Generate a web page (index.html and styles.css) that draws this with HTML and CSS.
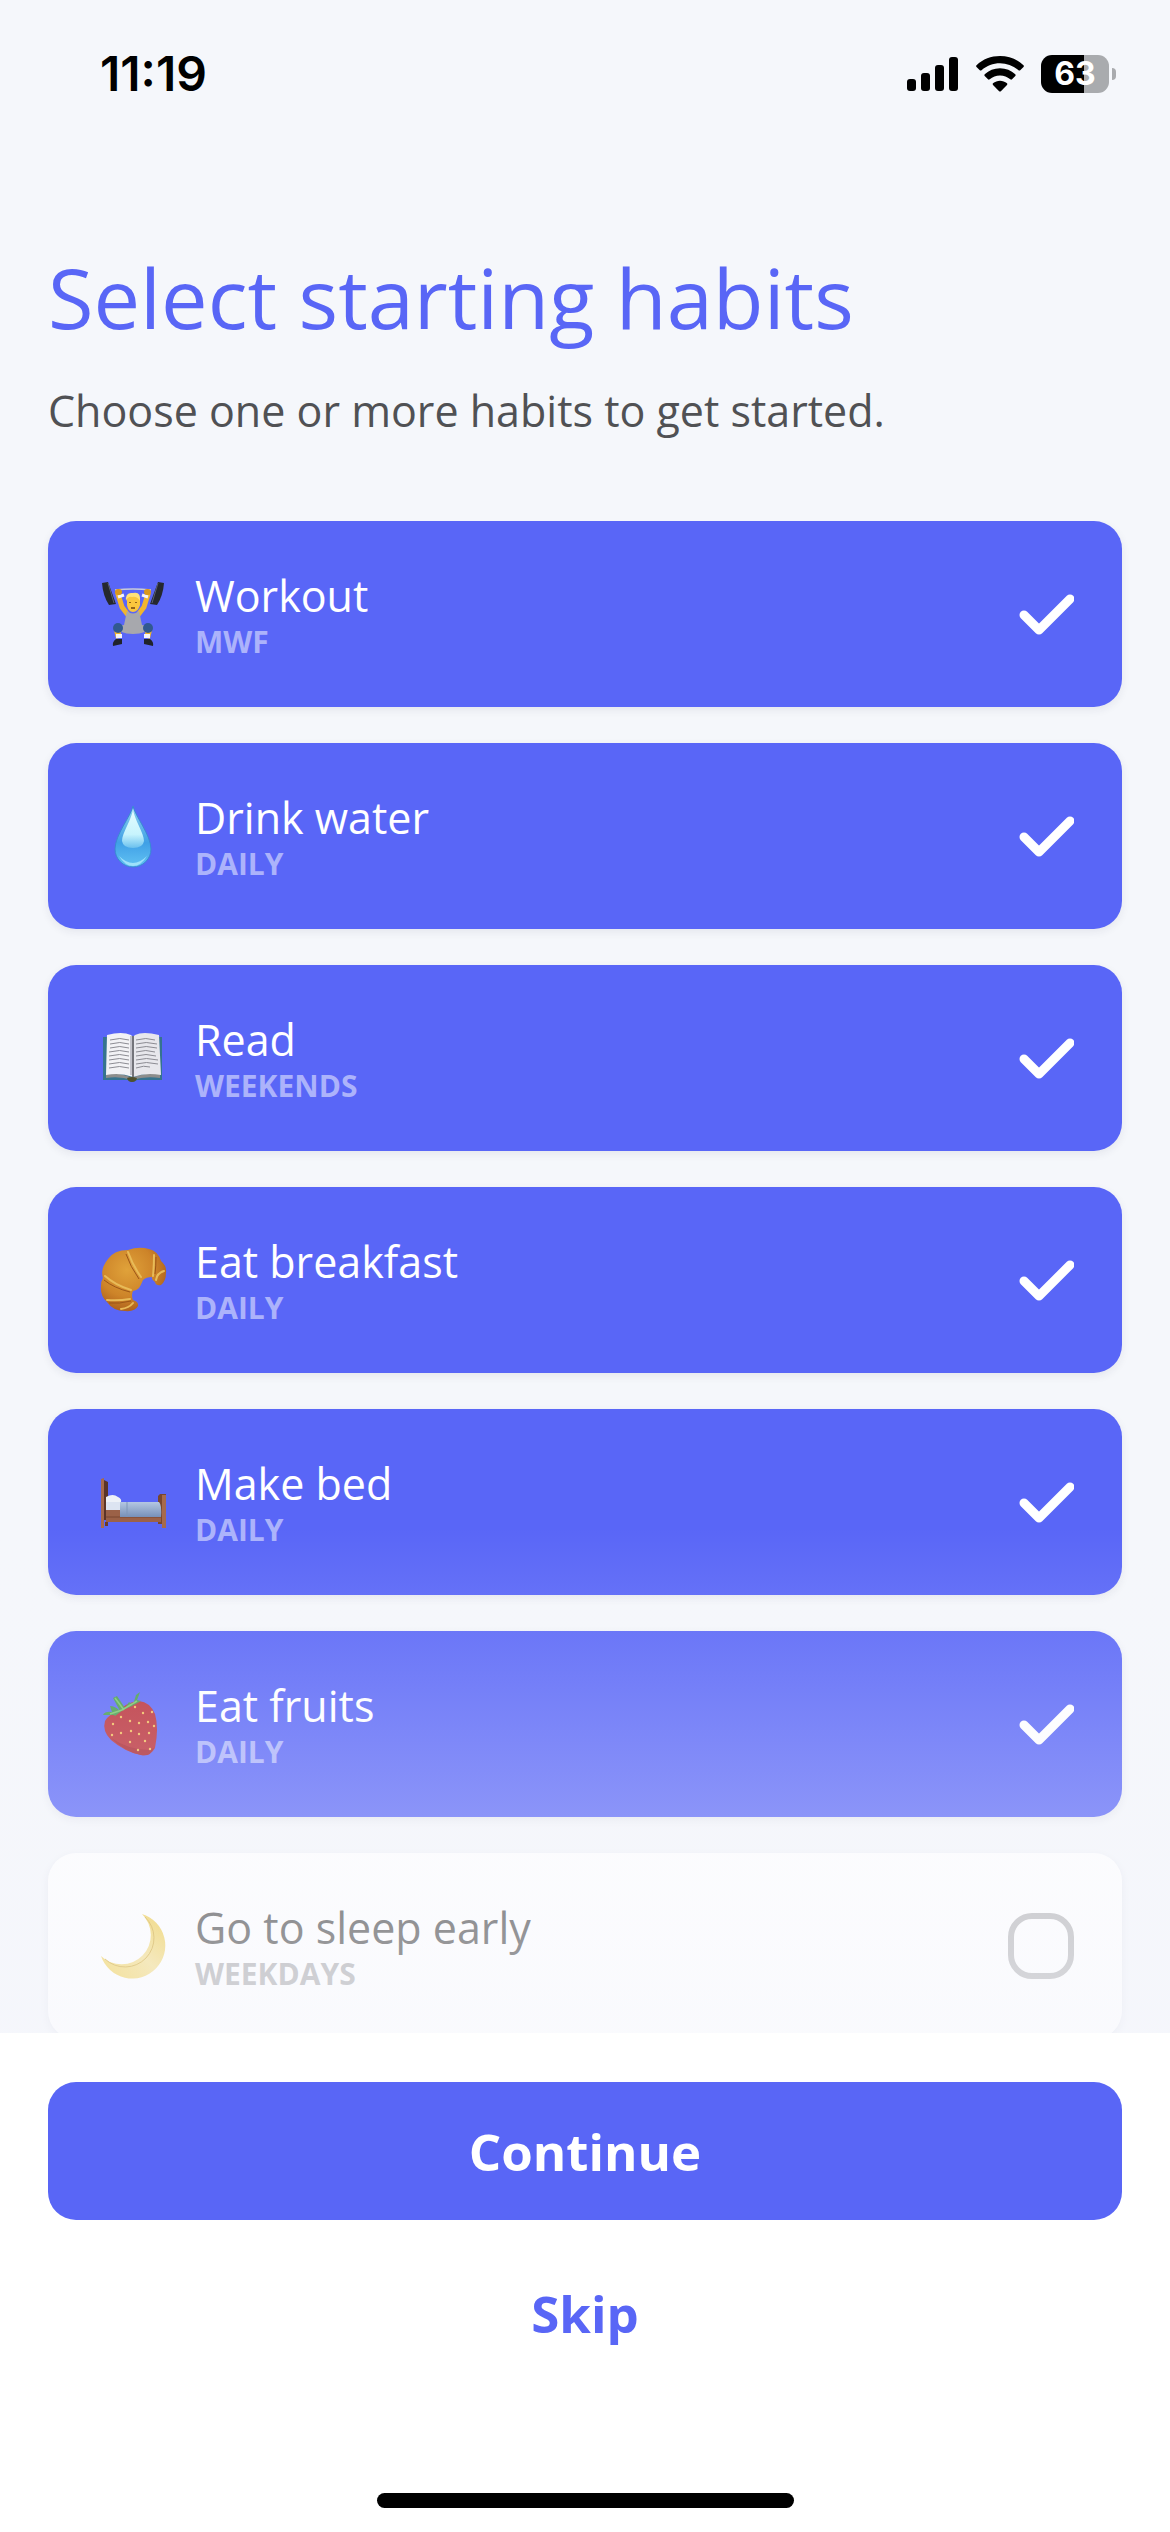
FILE: index.html
```html
<!DOCTYPE html>
<html lang="en">
<head>
    <meta charset="UTF-8">
    <meta name="viewport" content="width=device-width, initial-scale=1">
    <title>Select starting habits</title>
    <link rel="stylesheet" href="styles.css">
</head>
<body>
<!-- status bar -->
<div class="status">
    <span class="time">11:19</span>
    <div class="indicators">
        <svg width="52" height="36" viewBox="0 0 52 36">
            <rect x="0" y="23" width="9" height="12" rx="3"/>
            <rect x="14" y="17" width="9" height="18" rx="3"/>
            <rect x="28" y="9" width="9" height="26" rx="3"/>
            <rect x="42" y="1" width="9" height="34" rx="3"/>
        </svg>
        <svg width="48" height="36" viewBox="0 0 48 36">
            <path d="M24 0C33 0 41 3 47.500 9.200Q48.300 10 47.500 10.900L44.200 14.200Q43.400 15 42.500 14.200C37 9.500 31 7.200 24 7.200S11 9.500 5.500 14.200Q4.600 15 3.800 14.200L.5 10.900Q-.3 10 .5 9.200C7 3 15 0 24 0Z"/>
            <path d="M24 12.200C30 12.200 35 14.400 39.300 18.300Q40.100 19.200 39.300 20L36 23.300Q35.200 24 34.300 23.300C31.300 20.700 28 19.400 24 19.400S16.700 20.700 13.700 23.300Q12.800 24 12 23.300L8.700 20Q7.900 19.200 8.700 18.300C13 14.400 18 12.200 24 12.200Z"/>
            <path d="M24 24.700C26.500 24.700 29 25.600 31 27.200Q31.800 28 31 28.900L24.900 35.200Q24 36 23.100 35.200L17 28.900Q16.200 28 17 27.200C19 25.600 21.500 24.700 24 24.700Z"/>
        </svg>
        <div class="battery">
            <span class="level">63</span>
            <span class="tip"></span>
        </div>
    </div>
</div>

<header class="intro">
    <h1>Select starting habits</h1>
    <p>Choose one or more habits to get started.</p>
</header>

<!-- habit list -->
<main class="habits">
    <label class="habit selected">
        <svg class="emoji" viewBox="0 0 64 64">
            <path d="M14 8Q32 6 50 8" fill="none" stroke="#c9ccd8" stroke-width="1.500"/>
            <g fill="#25282e">
                <path d="M1 1 7 0 15 22 8 23Q2 14 1 1Z"/>
                <path d="M63 1 57 0 49 22 56 23Q62 14 63 1Z"/>
            </g>
            <g stroke="#596075" stroke-width="1">
                <path d="M7 1 13 21M57 1 51 21"/>
            </g>
            <path d="M17 12 21 25 27 33M47 12 43 25 37 33" fill="none" stroke="#f0b52e" stroke-width="5" stroke-linecap="round"/>
            <path d="M17 15 23 13M47 15 41 13" stroke="#f4f4f7" stroke-width="3"/>
            <rect x="14" y="7" width="7" height="6" rx="3" fill="#d9981d"/>
            <rect x="43" y="7" width="7" height="6" rx="3" fill="#d9981d"/>
            <path d="M16 48 18 56M48 48 46 56" stroke="#f0b52e" stroke-width="6"/>
            <path d="M15 54H21M43 54H49" stroke="#f4f4f7" stroke-width="4"/>
            <path d="M26 29Q32 34 38 29L41 43 50 44Q46 52 32 52T14 44L23 43Z" fill="#a7a8ad"/>
            <circle cx="17" cy="46" r="5" fill="#31598f"/>
            <circle cx="47" cy="46" r="5" fill="#31598f"/>
            <path d="M26 17Q26 11 32 11T39 17V23Q37 30 32 30T26 23Z" fill="#fac63d"/>
            <path d="M25 19Q24 10 32 11 40 9 39 19 36 14 31 15 27 14 25 19Z" fill="#ffe27a"/>
            <path d="M29 20V21M35 20V21M30 26H34" stroke="#70430f" stroke-width="1.500"/>
            <path d="M15 57H21V62L12 64Q11 60 15 57ZM43 57H49Q53 60 52 64L43 62Z" fill="#20232a"/>
        </svg>
        <span class="text">
            <span class="name">Workout</span>
            <span class="days">MWF</span>
        </span>
        <span class="tick">
            <input type="checkbox" checked>
            <svg viewBox="0 0 66 66"><path d="M16 34 31 49 62 18"/></svg>
        </span>
    </label>

    <label class="habit selected">
        <svg class="emoji" viewBox="0 0 64 64">
            <defs>
                <linearGradient id="drop" x1="0" y1="0" x2="0" y2="1">
                    <stop offset="0" stop-color="#8fd0ee"/>
                    <stop offset=".6" stop-color="#3fa0e6"/>
                    <stop offset="1" stop-color="#62c2f3"/>
                </linearGradient>
                <linearGradient id="shine" x1="0" y1="0" x2="0" y2="1">
                    <stop offset="0" stop-color="#e6fdff"/>
                    <stop offset=".65" stop-color="#c7f4fd"/>
                    <stop offset="1" stop-color="#6ac0ee"/>
                </linearGradient>
            </defs>
            <path d="M32 2C34 12 50 31 50 45A18 18 0 0 1 14 45C14 31 30 12 32 2Z" fill="url(#drop)" stroke="#3989d2" stroke-width="1"/>
            <path d="M32 5C33 15 43 29 43 37Q42 44 32 44T21 37C21 29 31 15 32 5Z" fill="url(#shine)"/>
            <path d="M18 52Q32 66 46 52 40 62 32 62T18 52Z" fill="#9de1fa"/>
        </svg>
        <span class="text">
            <span class="name">Drink water</span>
            <span class="days">DAILY</span>
        </span>
        <span class="tick">
            <input type="checkbox" checked>
            <svg viewBox="0 0 66 66"><path d="M16 34 31 49 62 18"/></svg>
        </span>
    </label>

    <label class="habit selected">
        <svg class="emoji" viewBox="0 0 64 64">
            <path d="M2 11H61V54H36Q31 58 27 54H2Z" fill="#35738f"/>
            <path d="M5 48Q19 46 31 52 44 46 59 48V52Q44 50 31 54 19 50 5 52Z" fill="#8c8d8c"/>
            <path d="M6 9Q21 5 30 9L32 11V51Q19 46 5 49Z" fill="#f2f2f5"/>
            <path d="M58 9Q42 5 34 9L32 11V51Q45 46 60 49Z" fill="#e7e7ec"/>
            <path d="M32 10V51" stroke="#73747a" stroke-width="2"/>
            <path d="M30 10V49" stroke="#c3c3ca" stroke-width="2"/>
            <g stroke="#8c8c93" stroke-width="1">
                <path d="M9 14Q19 11 28 14M9 18Q19 15 28 18M9 22Q19 19 28 22M8 26Q19 23 28 26M8 30Q19 27 28 30M8 34Q19 31 28 34M8 38Q19 35 28 38M8 42Q19 39 28 42" fill="none"/>
                <path d="M35 14Q45 11 54 14M35 18Q45 15 56 18M35 22Q45 19 56 22M35 26Q45 23 54 26M35 30Q45 27 55 30M35 34Q45 31 57 34M35 38Q45 35 57 38M35 42Q43 39 49 41" fill="none"/>
            </g>
            <path d="M26 52Q31 50 36 52 35 56 31 56T26 52Z" fill="#50512e"/>
        </svg>
        <span class="text">
            <span class="name">Read</span>
            <span class="days">WEEKENDS</span>
        </span>
        <span class="tick">
            <input type="checkbox" checked>
            <svg viewBox="0 0 66 66"><path d="M16 34 31 49 62 18"/></svg>
        </span>
    </label>

    <label class="habit selected">
        <svg class="emoji" viewBox="0 0 64 64">
            <defs>
                <radialGradient id="crust" cx=".4" cy=".35" r=".7">
                    <stop offset="0" stop-color="#e0a23a"/>
                    <stop offset=".6" stop-color="#cd8429"/>
                    <stop offset="1" stop-color="#a85a1a"/>
                </radialGradient>
            </defs>
            <path d="M27 2Q38-2 48 1 57 3 60 13 66 18 65 25 65 33 60 37 55 38 54 34 50 31 51 29 45 29 42 32 40 37 38 40 35 43 32 43 30 47 32 52 38 54 37 58 34 64 24 63 12 63 6 54-1 48 0 38 0 33 2 30-1 21 7 11 13 2 27 2Z" fill="url(#crust)"/>
            <g fill="none" stroke="#e8bb58" stroke-width="2" stroke-linecap="round">
                <path d="M27 4Q32 18 40 29"/>
                <path d="M53 7Q53 18 52 28"/>
                <path d="M4 28Q14 37 30 42"/>
                <path d="M6 52Q17 53 29 51"/>
                <path d="M63 23Q56 25 55 32"/>
                <path d="M20 61Q28 60 32 55"/>
            </g>
            <g fill="none" stroke="#9b5518" stroke-width="1">
                <path d="M25 6Q29 18 38 31M55 9Q55 18 54 26M3 32Q13 40 29 44M8 55Q18 56 30 53"/>
            </g>
        </svg>
        <span class="text">
            <span class="name">Eat breakfast</span>
            <span class="days">DAILY</span>
        </span>
        <span class="tick">
            <input type="checkbox" checked>
            <svg viewBox="0 0 66 66"><path d="M16 34 31 49 62 18"/></svg>
        </span>
    </label>

    <label class="habit selected">
        <svg class="emoji" viewBox="0 0 64 64">
            <defs>
                <linearGradient id="quilt" x1="0" y1="0" x2="0" y2="1">
                    <stop offset="0" stop-color="#b4c7e2"/>
                    <stop offset="1" stop-color="#7790b8"/>
                </linearGradient>
            </defs>
            <path d="M3 10 7 12V50H3Z" fill="#5b3428"/>
            <path d="M57 26 59 24H65V58H61V54H57Z" fill="#79462f"/>
            <path d="M5 40H60V52H5Z" fill="#9b6147"/>
            <path d="M5 47H60" stroke="#794630" stroke-width="1"/>
            <path d="M5 32H20V40H5Z" fill="#dce4f1"/>
            <path d="M5 27Q12 23 17 27 21 29 20 32H5Z" fill="#eef2f7"/>
            <path d="M19 32H58Q61 35 60 47H19Z" fill="url(#quilt)"/>
            <path d="M26 32V47" stroke="#7f96b9" stroke-width="1"/>
            <path d="M0 9 3 8V58H0Z" fill="#a7694b"/>
            <path d="M61 25H65V58H61Z" fill="#a66a4d"/>
            <path d="M4 52H7V56H4Z" fill="#6b3b2a"/>
        </svg>
        <span class="text">
            <span class="name">Make bed</span>
            <span class="days">DAILY</span>
        </span>
        <span class="tick">
            <input type="checkbox" checked>
            <svg viewBox="0 0 66 66"><path d="M16 34 31 49 62 18"/></svg>
        </span>
    </label>

    <label class="habit selected">
        <svg class="emoji" viewBox="0 0 64 64">
            <path d="M38 9Q49 10 54 22 58 36 54 56 49 65 40 63 24 60 10 48 1 39 4 29 8 22 18 19 25 10 38 9Z" fill="#b92d36"/>
            <path d="M10 46Q28 58 48 58L53 56Q49 65 40 63 24 60 10 46Z" fill="#a9242e"/>
            <path d="M13 23 2 23Q4 19 11 20L9 14Q14 14 19 19L12 6 16 4 24 16 28 10 32 13 35 3 39 0 36 8 40 9 31 14 22 18 14 24Z" fill="#439a4b"/>
            <path d="M14 6 23 18M9 22 21 18 36 9" fill="none" stroke="#75c568" stroke-width="1.500"/>
            <g fill="#f2bd5a">
                <circle cx="34" cy="15" r="1.200"/><circle cx="42" cy="21" r="1.200"/>
                <circle cx="51" cy="20" r="1.200"/><circle cx="20" cy="25" r="1.200"/>
                <circle cx="29" cy="29" r="1.200"/><circle cx="38" cy="31" r="1.200"/>
                <circle cx="47" cy="30" r="1.200"/><circle cx="53" cy="34" r="1.200"/>
                <circle cx="12" cy="32" r="1.200"/><circle cx="20" cy="41" r="1.200"/>
                <circle cx="30" cy="39" r="1.200"/><circle cx="38" cy="42" r="1.200"/>
                <circle cx="48" cy="41" r="1.200"/><circle cx="11" cy="43" r="1.200"/>
                <circle cx="29" cy="50" r="1.200"/><circle cx="44" cy="49" r="1.200"/>
                <circle cx="37" cy="58" r="1.200"/><circle cx="49" cy="57" r="1.200"/>
            </g>
        </svg>
        <span class="text">
            <span class="name">Eat fruits</span>
            <span class="days">DAILY</span>
        </span>
        <span class="tick">
            <input type="checkbox" checked>
            <svg viewBox="0 0 66 66"><path d="M16 34 31 49 62 18"/></svg>
        </span>
    </label>

    <label class="habit">
        <svg class="emoji" viewBox="0 0 64 64">
            <defs>
                <linearGradient id="moon" x1="0" y1="1" x2="1" y2="0">
                    <stop offset="0" stop-color="#f2cc3c"/>
                    <stop offset=".5" stop-color="#f4dc83"/>
                    <stop offset="1" stop-color="#edc52f"/>
                </linearGradient>
            </defs>
            <path d="M41 0A33 33 0 1 1 0 42A29 29 0 1 0 41 0Z" fill="url(#moon)"/>
            <path d="M4 45A29 29 0 0 0 44 3" fill="none" stroke="#cfa528" stroke-width="1"/>
        </svg>
        <span class="text">
            <span class="name">Go to sleep early</span>
            <span class="days">WEEKDAYS</span>
        </span>
        <span class="tick">
            <input type="checkbox">
        </span>
    </label>
</main>

<!-- actions -->
<footer class="actions">
    <button class="btn primary" type="button">Continue</button>
    <button class="btn" type="button">Skip</button>
    <div class="home"></div>
</footer>
</body>
</html>
```
FILE: styles.css
```css
* {
    box-sizing: border-box;
    margin: 0;
    padding: 0;
}

body {
    display: flex;
    flex-direction: column;
    height: 100vh;
    background-color: #f5f7fb;
    color: #505154;
    font-family: "Open Sans", sans-serif;
    overflow: hidden;
}

/* status bar */
.status {
    display: flex;
    flex: none;
    justify-content: space-between;
    align-items: center;
    padding: 44px 54px 0 100px;
    color: #000;
    font-family: Inter, sans-serif;
}

.time {
    font-size: 48px;
    line-height: 60px;
    font-weight: 600;
}

.indicators {
    display: flex;
    align-items: center;
    gap: 17px;
}

.battery {
    display: flex;
    align-items: center;
    gap: 3px;
}

.level {
    width: 68px;
    border-radius: 11px;
    background: linear-gradient(to right, #000 63%, #a9abae 63%);
    color: #fff;
    font-size: 32px;
    line-height: 38px;
    font-weight: 700;
    text-align: center;
}

.tip {
    width: 4px;
    height: 12px;
    border-radius: 0 4px 4px 0;
    background-color: #a9abae;
}

/* title */
.intro {
    flex: none;
    padding: 143px 48px 80px;
}

.intro h1 {
    color: #5966f6;
    font-size: 83px;
    line-height: 100px;
    font-weight: 400;
}

.intro p {
    margin-top: 34px;
    font-size: 43px;
    line-height: 60px;
}

/* list, fades out towards the buttons */
.habits {
    display: flex;
    flex: 1;
    flex-direction: column;
    gap: 36px;
    min-height: 0;
    padding: 0 48px;
    overflow: hidden;
    position: relative;
}

.habits::after {
    content: "";
    position: absolute;
    left: 0;
    right: 0;
    bottom: 0;
    height: 506px;
    background: linear-gradient(rgba(245, 246, 252, 0), rgba(245, 246, 252, 0.56));
    pointer-events: none;
}

.habit {
    display: flex;
    flex: none;
    align-items: center;
    padding: 46px 48px 46px 53px;
    border-radius: 28px;
    background-color: #fff;
    box-shadow: 0 3px 8px rgba(40, 40, 80, 0.08);
    color: #444;
}

.habit.selected {
    background-color: #5966f7;
    color: #fff;
}

.emoji {
    width: 64px;
    height: 64px;
    overflow: visible;
}

.text {
    display: flex;
    flex: 1;
    flex-direction: column;
    margin-left: 30px;
    padding-top: 2px;
}

.name {
    font-size: 43px;
    line-height: 54px;
}

.days {
    font-size: 30px;
    line-height: 38px;
    font-weight: 700;
    color: #a9a9ab;
}

.selected .days {
    color: #acb3fb;
}

/* checkbox and its mark share one cell */
.tick {
    display: grid;
}

.tick input,
.tick svg {
    grid-area: 1 / 1;
    width: 66px;
    height: 66px;
}

.tick input {
    appearance: none;
    border: 6px solid #b4b4b6;
    border-radius: 24px;
}

.tick input:checked {
    border-color: transparent;
}

.tick path {
    fill: none;
    stroke: #fff;
    stroke-width: 9;
    stroke-linecap: round;
    stroke-linejoin: round;
}

/* bottom buttons */
.actions {
    display: flex;
    flex: none;
    flex-direction: column;
    gap: 24px;
    padding: 49px 48px 24px;
    background-color: #fff;
}

.btn {
    height: 138px;
    border: none;
    border-radius: 28px;
    background: none;
    color: #5966f6;
    font-family: inherit;
    font-size: 51px;
    font-weight: 700;
}

.primary {
    background-color: #5966f6;
    color: #fff;
}

.home {
    align-self: center;
    width: 417px;
    height: 15px;
    margin-top: 87px;
    border-radius: 8px;
    background-color: #000;
}
```
